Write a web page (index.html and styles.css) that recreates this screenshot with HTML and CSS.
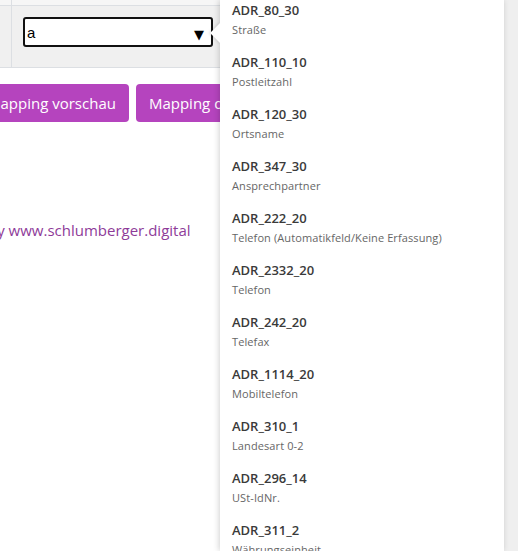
FILE: index.html
```html
<!DOCTYPE html>
<html lang="de">
<head>
<meta charset="utf-8">
<title>Mapping</title>
<link rel="stylesheet" href="styles.css">
</head>
<body>
<div class="page">
  <div class="main">
    <div class="grid">
      <div class="grid-top"><div class="cell-top"></div></div>
      <div class="grid-row">
        <div class="cell">
          <div class="select">
            <span class="select-value">a</span>
            <span class="select-arrow">&#9660;</span>
          </div>
        </div>
      </div>
    </div>
    <div class="actions">
      <button class="btn">Mapping vorschau</button>
      <button class="btn">Mapping durchführen</button>
    </div>
    <p class="credit">by <span class="link">www.schlumberger.digital</span></p>
  </div>
  <div class="scrollbar"></div>

  <div class="dropdown">
    <span class="notch"></span>
    <ul class="options">
      <li class="option"><span class="code">ADR_80_30</span><span class="desc">Straße</span></li>
      <li class="option"><span class="code">ADR_110_10</span><span class="desc">Postleitzahl</span></li>
      <li class="option"><span class="code">ADR_120_30</span><span class="desc">Ortsname</span></li>
      <li class="option"><span class="code">ADR_347_30</span><span class="desc">Ansprechpartner</span></li>
      <li class="option"><span class="code">ADR_222_20</span><span class="desc">Telefon (Automatikfeld/Keine Erfassung)</span></li>
      <li class="option"><span class="code">ADR_2332_20</span><span class="desc">Telefon</span></li>
      <li class="option"><span class="code">ADR_242_20</span><span class="desc">Telefax</span></li>
      <li class="option"><span class="code">ADR_1114_20</span><span class="desc">Mobiltelefon</span></li>
      <li class="option"><span class="code">ADR_310_1</span><span class="desc">Landesart 0-2</span></li>
      <li class="option"><span class="code">ADR_296_14</span><span class="desc">USt-IdNr.</span></li>
      <li class="option"><span class="code">ADR_311_2</span><span class="desc">Währungseinheit</span></li>
    </ul>
  </div>
</div>
</body>
</html>
```

FILE: styles.css
```css
* { box-sizing: border-box; }

html, body {
  margin: 0;
  padding: 0;
  background: #ffffff;
}

body {
  font-family: "Open Sans", "Noto Sans", sans-serif;
  color: #333333;
}

.page {
  position: relative;
  width: 518px;
  height: 551px;
  overflow: hidden;
  display: flex;
}

.main {
  flex: 1;
  min-width: 0;
}

.scrollbar {
  width: 14px;
  background: #efefef;
}

.grid {
  background: #f0f0f0;
  border-bottom: 1px solid #dcdfe3;
}

.grid-top {
  height: 6px;
  border-bottom: 1px solid #dcdfe3;
  background: #f6f6f6;
  padding-left: 11px;
}

.cell-top {
  height: 100%;
  border-left: 1px solid #dcdfe3;
}

.grid-row {
  padding-left: 11px;
  height: 61px;
}

.cell {
  height: 100%;
  border-left: 1px solid #dcdfe3;
  padding: 11px 0 0 11px;
}

.select {
  width: 190px;
  height: 30px;
  background: #ffffff;
  border: 2px solid #111111;
  border-radius: 3px;
  display: flex;
  align-items: center;
  justify-content: space-between;
  padding: 0 7px 0 2px;
}

.select-value {
  font-family: "Liberation Sans", Arial, sans-serif;
  font-size: 15px;
  color: #000000;
}

.select-arrow {
  font-family: "DejaVu Sans", sans-serif;
  font-size: 13px;
  color: #000000;
  margin-top: 4px;
}

.actions {
  display: flex;
  gap: 7px;
  margin: 16px 0 0 -26px;
}

.btn {
  flex: none;
  height: 38px;
  padding: 0 13px;
  border: none;
  border-radius: 4px;
  background: #b544be;
  color: #ffffff;
  font-family: "Open Sans", "Noto Sans", sans-serif;
  font-size: 15px;
  white-space: nowrap;
}

.credit {
  margin: 98px 0 0 -12px;
  font-size: 15px;
  color: #8e3b99;
  white-space: nowrap;
}

.link {
  color: #8e3b99;
}

.dropdown {
  position: absolute;
  left: 220px;
  top: 0;
  width: 284px;
  height: 551px;
  background: #ffffff;
  box-shadow: -1px 0 6px rgba(0, 0, 0, 0.18);
}

.notch {
  position: absolute;
  left: -7px;
  top: 26px;
  width: 14px;
  height: 14px;
  background: #ffffff;
  transform: rotate(45deg);
  box-shadow: -1px 1px 3px rgba(0, 0, 0, 0.12);
}

.options {
  position: relative;
  list-style: none;
  margin: -6px 0 0 0;
  padding: 0;
  background: #ffffff;
  height: 560px;
  overflow: hidden;
}

.option {
  display: flex;
  flex-direction: column;
  padding: 6px 12px;
}

.code {
  font-size: 13px;
  line-height: 20px;
  font-weight: 600;
  color: #3a3a3a;
}

.desc {
  font-size: 11px;
  line-height: 20px;
  color: #666666;
  letter-spacing: 0.1px;
}
```
